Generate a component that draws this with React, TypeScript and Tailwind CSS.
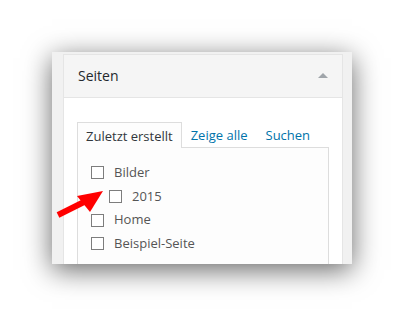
function Checkbox() {
  return <span className="block w-[13px] h-[13px] border border-[#7d7d7d] bg-white shrink-0" />;
}

function Item({ label, nested, h }: { label: string; nested?: boolean; h: string }) {
  return (
    <li className={`flex items-center gap-[10px] ${h} ${nested ? 'pl-[18px]' : ''}`}>
      <Checkbox />
      <span>{label}</span>
    </li>
  );
}

export default function App() {
  return (
    <div
      className="relative w-[404px] h-[316px] bg-white overflow-hidden pl-[52px] pt-[52px]"
      style={{ fontFamily: '"Open Sans", "Liberation Sans", sans-serif' }}
    >
      <div className="w-[300px] h-[212px] overflow-hidden bg-[#f1f1f1] pl-[11px] pr-[9px] pt-[2px] shadow-[0_6px_26px_rgba(0,0,0,0.6)]">
        <div className="h-[230px] border border-[#e5e5e5] bg-white">
          <div className="flex items-center justify-between h-[43px] bg-[#f5f5f5] border-b border-[#e5e5e5] pl-[14px] pr-[14px] pb-[2px]">
            <span className="text-[14px] text-[#23282d]">Seiten</span>
            <span className="block w-0 h-0 border-l-[5px] border-r-[5px] border-b-[5px] border-l-transparent border-r-transparent border-b-[#a0a5aa]" />
          </div>
          <div className="pt-[24px] px-[13px]">
            <div className="flex items-end text-[13px]">
              <div className="relative z-10 -mb-px h-[26px] flex items-center pt-[3px] px-[8px] border border-b-0 border-[#dddddd] bg-[#fdfdfd] text-[#32373c]">
                Zuletzt erstellt
              </div>
              <div className="h-[25px] flex items-center pt-[3px] px-[9px] text-[#0073aa]">Zeige alle</div>
              <div className="h-[25px] flex items-center pt-[3px] px-[9px] text-[#0073aa]">Suchen</div>
            </div>
            <div className="h-[200px] border border-[#dddddd] bg-[#fdfdfd] pt-[12px] pl-[13px]">
              <ul className="text-[13px] text-[#555555]">
                <Item label="Bilder" h="h-[25px]" />
                <Item label="2015" nested h="h-[23px]" />
                <Item label="Home" h="h-[24px]" />
                <Item label="Beispiel-Seite" h="h-[23px]" />
              </ul>
            </div>
          </div>
        </div>
      </div>
      <svg className="absolute left-0 top-0 pointer-events-none" width="404" height="316" viewBox="0 0 404 316">
        <line x1="58" y1="215" x2="88" y2="200" stroke="#ff0000" strokeWidth="6" />
        <polygon points="103,191 77,196 90,212" fill="#ff0000" />
      </svg>
    </div>
  );
}
